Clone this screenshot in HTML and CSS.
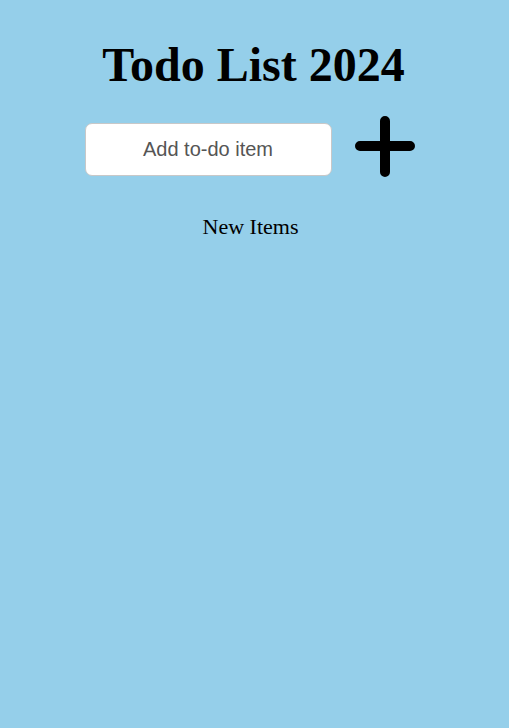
FILE: index.html
```html
<!DOCTYPE html>
<html>
<head>
<meta charset="utf-8">
<link rel="stylesheet" href="styles.css">
</head>
<body>
<div class="app">
  <h1 class="title">Todo List 2024</h1>
  <div class="form">
    <input class="field" type="text" placeholder="Add to-do item">
    <button class="add" aria-label="Add">
      <svg width="62" height="62" viewBox="0 0 62 62"><path d="M30 6V57M5 31H55" stroke="#000" stroke-width="10" stroke-linecap="round" fill="none"/></svg>
    </button>
  </div>
  <p class="section">New Items</p>
</div>
</body>
</html>
```
FILE: styles.css
```css
html, body {
  margin: 0;
  height: 100%;
}
body {
  background: #95cfea;
  font-family: "Liberation Serif", "Times New Roman", serif;
  color: #000;
}
.app {
  display: flex;
  flex-direction: column;
  align-items: center;
  padding-top: 37px;
}
.title {
  margin: 0 0 0 -2px;
  font-size: 48px;
  font-weight: bold;
  line-height: 56px;
}
.form {
  display: flex;
  align-items: flex-start;
  gap: 23px;
  margin-top: 22px;
  margin-left: -8px;
}
.field {
  box-sizing: border-box;
  width: 247px;
  height: 53px;
  margin-top: 8px;
  border: 1px solid #c8c8c8;
  border-radius: 7px;
  background: #fff;
  font-family: "Liberation Sans", Arial, sans-serif;
  font-size: 20px;
  text-align: center;
  color: #333;
  outline: none;
}
.field::placeholder {
  color: #555;
}
.add {
  display: block;
  padding: 0;
  border: 0;
  background: none;
  width: 62px;
  height: 62px;
}
.add svg { display: block; }
.section {
  margin: 37px 0 0 -8px;
  font-size: 22px;
}
```
